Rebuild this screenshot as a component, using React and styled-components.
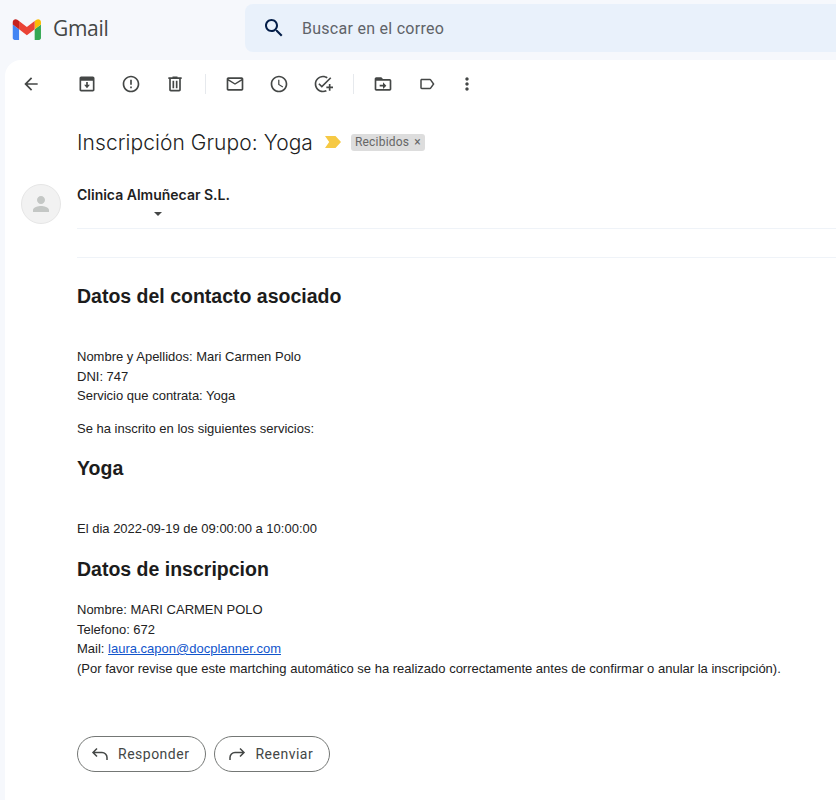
import styled, { createGlobalStyle } from 'styled-components'

const icons = {
  back: 'M20 11H7.83l5.59-5.59L12 4l-8 8 8 8 1.41-1.41L7.83 13H20v-2z',
  archive: 'M19 3H5c-1.1 0-2 .9-2 2v14c0 1.1.9 2 2 2h14c1.1 0 2-.9 2-2V5c0-1.1-.9-2-2-2zm0 16H5V8h14v11zM13 9.5h-2V13H8.5l3.5 4 3.5-4H13V9.5z',
  report: 'M12 2C6.48 2 2 6.48 2 12s4.48 10 10 10 10-4.48 10-10S17.52 2 12 2zm0 18c-4.42 0-8-3.58-8-8s3.58-8 8-8 8 3.58 8 8-3.58 8-8 8zm-1-5h2v2h-2zm0-8h2v6h-2z',
  trash: 'M15 4V3H9v1H4v2h1v13c0 1.1.9 2 2 2h10c1.1 0 2-.9 2-2V6h1V4h-5zm2 15H7V6h10v13zM9 8h2v9H9zm4 0h2v9h-2z',
  mail: 'M22 6c0-1.1-.9-2-2-2H4c-1.1 0-2 .9-2 2v12c0 1.1.9 2 2 2h16c1.1 0 2-.9 2-2V6zm-2 0l-8 5-8-5h16zm0 12H4V8l8 5 8-5v10z',
  clock: 'M11.99 2C6.47 2 2 6.48 2 12s4.47 10 9.99 10C17.52 22 22 17.52 22 12S17.52 2 11.99 2zM12 20c-4.42 0-8-3.58-8-8s3.58-8 8-8 8 3.58 8 8-3.58 8-8 8zm.5-13H11v6l5.25 3.15.75-1.23-4.5-2.67z',
  task: 'M22 5.18L10.59 16.6l-4.24-4.24 1.41-1.41 2.83 2.83 10-10L22 5.18zM12 20c-4.41 0-8-3.59-8-8s3.59-8 8-8c1.57 0 3.04.46 4.28 1.25l1.45-1.45C16.1 2.67 14.13 2 12 2 6.48 2 2 6.48 2 12s4.48 10 10 10c1.73 0 3.36-.44 4.78-1.22l-1.5-1.5c-1 .46-2.11.72-3.28.72zm7-5h-3v2h3v3h2v-3h3v-2h-3v-3h-2v3z',
  move: 'M20 6h-8l-2-2H4c-1.1 0-1.99.9-1.99 2L2 18c0 1.1.9 2 2 2h16c1.1 0 2-.9 2-2V8c0-1.1-.9-2-2-2zm0 12H4V8h16v10zm-8-3H8v-2h4v-3l4 4-4 4v-3z',
  label: 'M17.63 5.84C17.27 5.33 16.67 5 16 5L5 5.01C3.9 5.01 3 5.9 3 7v10c0 1.1.9 1.99 2 1.99L16 19c.67 0 1.27-.33 1.63-.84L22 12l-4.37-6.16zM16 17H5V7h11l3.55 5L16 17z',
  more: 'M12 8c1.1 0 2-.9 2-2s-.9-2-2-2-2 .9-2 2 .9 2 2 2zm0 2c-1.1 0-2 .9-2 2s.9 2 2 2 2-.9 2-2-.9-2-2-2zm0 6c-1.1 0-2 .9-2 2s.9 2 2 2 2-.9 2-2-.9-2-2-2z',
  search: 'M15.5 14h-.79l-.28-.27C15.41 12.59 16 11.11 16 9.5 16 5.91 13.09 3 9.5 3S3 5.91 3 9.5 5.91 16 9.5 16c1.61 0 3.09-.59 4.23-1.57l.27.28v.79l5 4.99L20.49 19l-4.99-5zm-6 0C7.01 14 5 11.99 5 9.5S7.01 5 9.5 5 14 7.01 14 9.5 11.99 14 9.5 14z',
}

const Icon = ({ name, size = 20 }) => (
  <svg width={size} height={size} viewBox="0 0 24 24" fill="#444746">
    <path d={icons[name]} />
  </svg>
)

export default function App() {
  return (
    <>
      <GlobalStyle />
      <Page>
        <Header>
          <Logo>
            <svg width="30" height="23" viewBox="0 0 52 42">
              <path fill="#4285f4" d="M3.5 42h8V22.5L0 13.9V38.5C0 40.4 1.6 42 3.5 42z" />
              <path fill="#34a853" d="M40 42h8c1.9 0 3.5-1.6 3.5-3.5V13.9L40 22.5z" />
              <path fill="#fbbc04" d="M40 7.5v15l11.5-8.6V9.2c0-4.3-4.9-6.7-8.3-4.2z" />
              <path fill="#ea4335" d="M11.5 22.5v-15L25.75 18.2 40 7.5v15L25.75 33.2z" />
              <path fill="#c5221f" d="M0 9.2v4.7l11.5 8.6v-15L8.3 5C4.9 2.5 0 4.9 0 9.2z" />
            </svg>
            <LogoText>Gmail</LogoText>
          </Logo>
          <SearchBox>
            <svg width="24" height="24" viewBox="0 0 24 24" fill="#041e49">
              <path d={icons.search} />
            </svg>
            <SearchText>Buscar en el correo</SearchText>
          </SearchBox>
        </Header>
        <Card>
          <Toolbar>
            <IconButton><Icon name="back" /></IconButton>
            <ToolGroup $first>
              <IconButton><Icon name="archive" /></IconButton>
              <IconButton><Icon name="report" /></IconButton>
              <IconButton><Icon name="trash" /></IconButton>
            </ToolGroup>
            <ToolDivider />
            <ToolGroup>
              <IconButton><Icon name="mail" /></IconButton>
              <IconButton><Icon name="clock" /></IconButton>
              <IconButton><Icon name="task" /></IconButton>
            </ToolGroup>
            <ToolDivider />
            <ToolGroup>
              <IconButton><Icon name="move" /></IconButton>
              <IconButton><Icon name="label" size={18} /></IconButton>
              <IconButton $narrow><Icon name="more" /></IconButton>
            </ToolGroup>
          </Toolbar>

          <SubjectRow>
            <Subject>Inscripción Grupo: Yoga</Subject>
            <svg width="16" height="12" viewBox="0 0 16 12">
              <path fill="#f6c944" d="M0 0h10.5L16 6l-5.500 6H0l4.200-6z" />
            </svg>
            <Chip>Recibidos<ChipClose>×</ChipClose></Chip>
          </SubjectRow>

          <SenderRow>
            <Avatar>
              <svg width="24" height="24" viewBox="0 0 24 24" fill="#c4c7c5">
                <path d="M12 12c2.210 0 4-1.790 4-4s-1.790-4-4-4-4 1.790-4 4 1.790 4 4 4zm0 2c-2.670 0-8 1.340-8 4v2h16v-2c0-2.660-5.330-4-8-4z" />
              </svg>
            </Avatar>
            <SenderInfo>
              <SenderName>Clinica Almuñecar S.L.</SenderName>
              <Caret />
            </SenderInfo>
          </SenderRow>

          <Message>
            <Heading>Datos del contacto asociado</Heading>
            <Paragraph $top={39}>
              Nombre y Apellidos: Mari Carmen Polo<br />
              DNI: 747<br />
              Servicio que contrata: Yoga
            </Paragraph>
            <Paragraph $top={13}>Se ha inscrito en los siguientes servicios:</Paragraph>
            <Heading $top={19}>Yoga</Heading>
            <Paragraph $top={39}>El dia 2022-09-19 de 09:00:00 a 10:00:00</Paragraph>
            <Heading $top={19}>Datos de inscripcion</Heading>
            <Paragraph $top={19.5}>
              Nombre: MARI CARMEN POLO<br />
              Telefono: 672<br />
              Mail: <MailLink>laura.capon@docplanner.com</MailLink><br />
              (Por favor revise que este martching automático se ha realizado correctamente antes de confirmar o anular la inscripción).
            </Paragraph>
          </Message>

          <Actions>
            <ActionButton>
              <svg width="20" height="20" viewBox="0 0 20 20" fill="none" stroke="#444746" strokeWidth="1.5">
                <path d="M8 4.500 4 8.500 8 12.500M4 8.500h9a5 5 0 0 1 5 5V16" />
              </svg>
              Responder
            </ActionButton>
            <ActionButton>
              <svg width="20" height="20" viewBox="0 0 20 20" fill="none" stroke="#444746" strokeWidth="1.5">
                <path d="M14 4.500 18 8.500 14 12.500M18 8.500H9a5 5 0 0 0-5 5V16" />
              </svg>
              Reenviar
            </ActionButton>
          </Actions>
        </Card>
      </Page>
    </>
  )
}

const GlobalStyle = createGlobalStyle`
  html, body {
    margin: 0;
    height: 100%;
    overflow: hidden;
    background: #f6f8fc;
  }
`
const Page = styled.div`
  width: 836px;
  height: 800px;
  overflow: hidden;
  display: flex;
  flex-direction: column;
  font-family: "Liberation Sans", Arial, sans-serif;
`
const Header = styled.header`
  height: 60px;
  flex: none;
  display: flex;
  align-items: flex-start;
  padding-top: 4px;
  box-sizing: border-box;
`
const Logo = styled.div`
  width: 245px;
  height: 48px;
  flex: none;
  display: flex;
  align-items: center;
  padding-left: 12px;
  gap: 11px;
  box-sizing: border-box;
`
const LogoText = styled.span`
  font-family: "Open Sans", sans-serif;
  font-size: 21px;
  color: #444746;
  letter-spacing: -0.3px;
`
const SearchBox = styled.div`
  flex: 1;
  height: 48px;
  display: flex;
  align-items: center;
  gap: 16px;
  padding-left: 17px;
  background: #e9f1fb;
  border-radius: 8px 0 0 8px;
`
const SearchText = styled.span`
  font-family: Roboto, sans-serif;
  font-size: 16px;
  letter-spacing: 0.27px;
  color: #5f6368;
`
const Card = styled.main`
  flex: 1;
  margin-left: 5px;
  background: #fff;
  border-radius: 16px 0 0 0;
  display: flex;
  flex-direction: column;
`
const Toolbar = styled.div`
  height: 48px;
  flex: none;
  display: flex;
  align-items: center;
  padding-left: 4px;
`
const ToolGroup = styled.div`
  display: flex;
  align-items: center;
  margin-left: ${(p) => (p.$first ? 12 : 0)}px;
`
const IconButton = styled.div`
  width: ${(p) => (p.$narrow ? 36 : 44)}px;
  height: 40px;
  display: flex;
  align-items: center;
  justify-content: center;
`
const ToolDivider = styled.div`
  width: 1px;
  height: 20px;
  margin: 0 7.5px;
  background: #e6e9ed;
`
const SubjectRow = styled.div`
  height: 28px;
  margin: 20px 0 0 72px;
  display: flex;
  align-items: center;
`
const Subject = styled.h1`
  margin: 0 12px 0 0;
  font-family: Inter, sans-serif;
  font-weight: 300;
  font-size: 21px;
  letter-spacing: 0.06px;
  color: #1f1f1f;
  white-space: nowrap;
`
const Chip = styled.span`
  margin-left: 10px;
  height: 17px;
  padding: 0 4px;
  display: flex;
  align-items: center;
  gap: 5px;
  background: #dddddd;
  border-radius: 3px;
  font-family: Roboto, sans-serif;
  font-size: 12px;
  letter-spacing: 0.2px;
  color: #666666;
`
const ChipClose = styled.span`
  font-size: 12px;
  color: #666;
`
const SenderRow = styled.div`
  margin: 28px 0 0 16px;
  display: flex;
  gap: 16px;
`
const Avatar = styled.div`
  width: 40px;
  height: 40px;
  flex: none;
  display: flex;
  align-items: center;
  justify-content: center;
  box-sizing: border-box;
  border: 1px solid #e6e6e6;
  border-radius: 50%;
  background: #f2f2f2;
`
const SenderInfo = styled.div`
  flex: 1;
  height: 44px;
  border-bottom: 1px solid #eff3f8;
`
const SenderName = styled.div`
  font-family: Inter, sans-serif;
  font-weight: 600;
  font-size: 14px;
  line-height: 20px;
  padding-top: 1px;
  color: #1f1f1f;
`
const Caret = styled.div`
  width: 0;
  margin: 7px 0 0 77px;
  border-top: 4px solid #444746;
  border-left: 4px solid transparent;
  border-right: 4px solid transparent;
`
const Message = styled.section`
  margin: 28px 0 0 72px;
  padding-top: 27px;
  border-top: 1px solid #eff3f8;
  color: #222;
`
const Heading = styled.h2`
  margin: ${(p) => p.$top || 0}px 0 0;
  font-size: 19.5px;
  font-weight: 700;
  line-height: 23px;
  color: #1c1c1c;
`
const Paragraph = styled.p`
  margin: ${(p) => p.$top}px 0 0;
  font-size: 13px;
  line-height: 19.5px;
`
const MailLink = styled.a`
  color: #1155cc;
  text-decoration: underline;
`
const Actions = styled.div`
  margin: 57.500px 0 0 72px;
  display: flex;
  gap: 8px;
`
const ActionButton = styled.div`
  height: 36px;
  padding: 0 16px 0 11px;
  display: flex;
  align-items: center;
  gap: 9px;
  box-sizing: border-box;
  border: 1px solid #747775;
  border-radius: 18px;
  font-family: Roboto, sans-serif;
  font-size: 14px;
  letter-spacing: 0.5px;
  color: #444746;
`
